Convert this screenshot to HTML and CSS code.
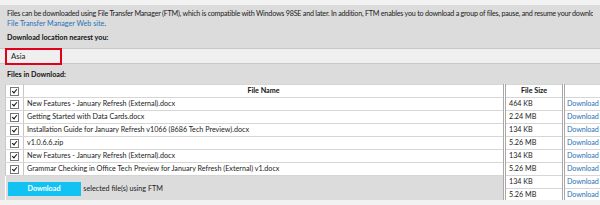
FILE: index.html
```html
<!DOCTYPE html>
<html lang="en">
  <head>
    <meta charset="UTF-8" />
    <title>File Transfer Manager</title>
    <link rel="stylesheet" href="styles.css">
  </head>
  <body>
    <div class="page">
      <p class="intro">
        <span class="line">Files can be downloaded using File Transfer Manager (FTM), which is compatible with Windows 98SE and later. In addition, FTM enables you to download a group of files, pause, and resume your download in case of</span>
        <a href="#" class="link">File Transfer Manager Web site</a>.
      </p>
      <div class="label">Download location nearest you:</div>
      <div class="location">
        <span class="location-box">Asia</span>
      </div>
      <div class="label files-label">Files in Download:</div>
      <table class="files">
        <tr class="head">
          <th class="check"><span class="box"></span></th>
          <th class="name">File Name</th>
          <th class="size">File Size</th>
          <th class="dl"></th>
        </tr>
        <tr>
          <td class="check"><span class="box"></span></td>
          <td class="name">New Features - January Refresh (External).docx</td>
          <td class="size">464 KB</td>
          <td class="dl"><a href="#">Download</a></td>
        </tr>
        <tr>
          <td class="check"><span class="box"></span></td>
          <td class="name">Getting Started with Data Cards.docx</td>
          <td class="size">2.24 MB</td>
          <td class="dl"><a href="#">Download</a></td>
        </tr>
        <tr>
          <td class="check"><span class="box"></span></td>
          <td class="name">Installation Guide for January Refresh v1066 (8686 Tech Preview).docx</td>
          <td class="size">134 KB</td>
          <td class="dl"><a href="#">Download</a></td>
        </tr>
        <tr>
          <td class="check"><span class="box"></span></td>
          <td class="name">v1.0.6.6.zip</td>
          <td class="size">5.26 MB</td>
          <td class="dl"><a href="#">Download</a></td>
        </tr>
        <tr>
          <td class="check"><span class="box"></span></td>
          <td class="name">New Features - January Refresh (External).docx</td>
          <td class="size">134 KB</td>
          <td class="dl"><a href="#">Download</a></td>
        </tr>
        <tr>
          <td class="check"><span class="box"></span></td>
          <td class="name">Grammar Checking in Office Tech Preview for January Refresh (External) v1.docx</td>
          <td class="size">5.26 MB</td>
          <td class="dl"><a href="#">Download</a></td>
        </tr>
        <tr>
          <td class="actions" colspan="2" rowspan="2">
            <button class="download-btn">Download</button>
            <span>selected file(s) using FTM</span>
          </td>
          <td class="size">134 KB</td>
          <td class="dl"><a href="#">Download</a></td>
        </tr>
        <tr>
          <td class="size">5.26 MB</td>
          <td class="dl"><a href="#">Download</a></td>
        </tr>
      </table>
    </div>
  </body>
</html>
```

FILE: styles.css
```css
body {
  margin: 0;
  background: #f2f2f2;
  font-family: Lato, "Open Sans", sans-serif;
  font-size: 7.2px;
  color: #222;
  overflow: hidden;
}
.page {
  margin-top: 5px;
  background: #dcdcdc;
  height: 195px;
}
.intro {
  margin: 0;
  padding: 4px 7px 0;
  line-height: 10px;
}
.line {
  display: block;
  white-space: nowrap;
  overflow: hidden;
  letter-spacing: -0.24px;
}
.link,
.dl a {
  color: #2a72b5;
  text-decoration: none;
}
.label {
  font-weight: bold;
  padding: 4px 7px 0;
  line-height: 10px;
  color: #111;
}
.location {
  margin-top: 5px;
  height: 14px;
  background: #efefef;
  border-top: 1px solid #c8c8c8;
  border-bottom: 1px solid #c8c8c8;
  display: flex;
  align-items: center;
}
.location-box {
  margin-left: 5px;
  width: 57px;
  height: 17px;
  border: 2px solid #e3001b;
  box-sizing: border-box;
  padding-left: 4px;
  line-height: 13px;
  font-size: 7.8px;
  color: #222;
}
.files-label {
  padding-top: 6px;
}
.files {
  margin: 4px 0 0 5px;
  border-collapse: collapse;
  background: #fff;
  width: 600px;
  table-layout: fixed;
}
.files td,
.files th {
  height: 12px;
  padding: 0 3px;
  border-top: 1px solid #d6d6d6;
  border-bottom: 1px solid #d6d6d6;
  white-space: nowrap;
  overflow: hidden;
  line-height: 12px;
}
.files th {
  font-weight: bold;
  color: #111;
}
.files .check {
  width: 11px;
  border-left: 1px solid #c8c8c8;
  border-right: 1px solid #c8c8c8;
  text-align: center;
}
.files .size {
  width: 50px;
  border-left: 3px double #a8a8a8;
}
.files th.size {
  text-align: center;
}
.files .dl {
  width: 35px;
  padding-left: 2px;
  border-left: 3px double #a8a8a8;
  letter-spacing: -0.1px;
}
.box {
  display: inline-block;
  width: 7px;
  height: 7px;
  border: 1px solid #777;
  background: #fff;
  position: relative;
  vertical-align: middle;
}
.box::after {
  content: "";
  position: absolute;
  left: 2px;
  top: 0;
  width: 2px;
  height: 4px;
  border: solid #111;
  border-width: 0 1.5px 1.5px 0;
  transform: rotate(40deg);
}
.files .actions {
  background: #dcdcdc;
  border: none;
  border-top: 1px solid #d6d6d6;
  padding: 0 0 0 2px;
  vertical-align: middle;
}
.download-btn {
  width: 73px;
  height: 14px;
  background: #12c2f2;
  border: none;
  color: #fff;
  font-family: inherit;
  font-size: 7.2px;
  font-weight: bold;
  padding: 0;
  margin-right: 1px;
  vertical-align: middle;
}
```
